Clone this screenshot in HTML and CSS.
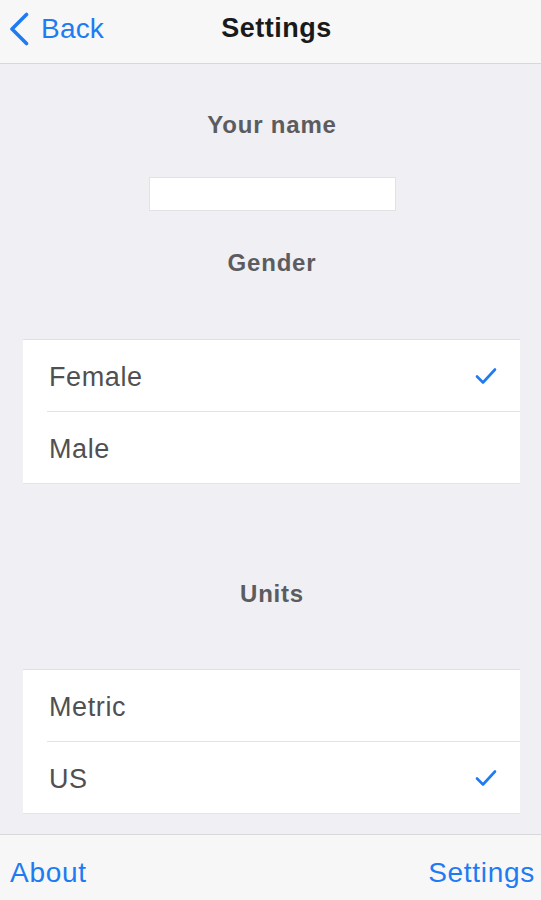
FILE: index.html
```html
<!DOCTYPE html>
<html lang="en">
<head>
<meta charset="utf-8">
<title>Settings</title>
<link rel="stylesheet" href="styles.css">
</head>
<body>
<div class="app">
  <header class="navbar">
    <a class="nav-back" href="#">
      <svg class="chevron" width="20" height="34" viewBox="0 0 20 34" aria-hidden="true">
        <path d="M17.5 2.5 L3 17 L17.5 31.5" fill="none" stroke="#1f7bf2" stroke-width="3.6" stroke-linecap="round" stroke-linejoin="round"/>
      </svg>
      <span>Back</span>
    </a>
    <h1 class="nav-title">Settings</h1>
    <span class="nav-spacer"></span>
  </header>

  <main class="content">
    <h2 class="section-label label-name">Your name</h2>
    <input class="name-input" type="text" aria-label="Your name">
    <h2 class="section-label label-gender">Gender</h2>
    <ul class="group group-gender">
      <li class="row"><span class="row-text">Female</span>
        <svg class="check" width="22" height="18" viewBox="0 0 22 18" aria-hidden="true"><path d="M2 9.5 L8 15.5 L20 2.5" fill="none" stroke="#1f7bf2" stroke-width="2.6" stroke-linecap="round" stroke-linejoin="round"/></svg>
      </li>
      <li class="row"><span class="row-text">Male</span></li>
    </ul>
    <h2 class="section-label label-units">Units</h2>
    <ul class="group group-units">
      <li class="row"><span class="row-text">Metric</span></li>
      <li class="row"><span class="row-text">US</span>
        <svg class="check" width="22" height="18" viewBox="0 0 22 18" aria-hidden="true"><path d="M2 9.5 L8 15.5 L20 2.5" fill="none" stroke="#1f7bf2" stroke-width="2.6" stroke-linecap="round" stroke-linejoin="round"/></svg>
      </li>
    </ul>
  </main>

  <footer class="tabbar">
    <a class="tab" href="#">About</a>
    <a class="tab" href="#">Settings</a>
  </footer>
</div>
</body>
</html>
```

FILE: styles.css
```css
* { box-sizing: border-box; }

html, body {
  margin: 0;
  padding: 0;
}

body {
  font-family: "Liberation Sans", Arial, sans-serif;
  background: #efeff4;
  width: 541px;
  height: 900px;
  overflow: hidden;
}

.app {
  display: flex;
  flex-direction: column;
  height: 900px;
}

.navbar {
  height: 64px;
  flex: none;
  background: #f7f7f7;
  border-bottom: 1px solid #d8d8da;
  display: grid;
  grid-template-columns: 1fr auto 1fr;
  align-items: center;
  padding: 0 0 6px 9px;
}

.nav-back {
  display: flex;
  align-items: center;
  gap: 12px;
  color: #1f7bf2;
  text-decoration: none;
  font-size: 28px;
  letter-spacing: 0.2px;
}

.chevron { display: block; margin-top: 1px; }

.nav-title {
  margin: 0 0 0 3px;
  font-size: 27px;
  font-weight: bold;
  color: #1a1a1a;
  letter-spacing: 0.5px;
}

.content {
  flex: 1;
  display: flex;
  flex-direction: column;
  align-items: center;
  padding-top: 46px;
}

.section-label {
  margin: 0;
  height: 30px;
  line-height: 30px;
  font-size: 24px;
  font-weight: bold;
  color: #5c5c60;
  letter-spacing: 0.8px;
  padding-left: 3px;
}

.name-input {
  margin-top: 37px;
  width: 247px;
  height: 34px;
  background: #fff;
  border: 1px solid #e2e2e6;
  margin-left: 3px;
  padding: 0 6px;
  font: inherit;
  font-size: 20px;
  outline: none;
}

.label-gender { margin-top: 37px; }

.group {
  list-style: none;
  margin: 0;
  padding: 0;
  width: 497px;
  margin-left: 2px;
  background: #fff;
  border-top: 1px solid #dfdfe2;
  border-bottom: 1px solid #e4e4e7;
}

.group-gender { margin-top: 61px; }
.label-units { margin-top: 95px; }
.group-units { margin-top: 60px; }

.row {
  height: 72px;
  display: flex;
  align-items: center;
  justify-content: space-between;
  margin-left: 24px;
  padding-left: 2px;
  padding-right: 23px;
}

.row + .row {
  border-top: 1px solid #e3e3e6;
  height: 72px;
}

.group .row:first-child { height: 71px; }

.row-text {
  font-size: 27px;
  color: #505052;
  letter-spacing: 0.6px;
  padding-top: 4px;
}

.check { display: block; margin-top: 1px; }

.tabbar {
  flex: none;
  height: 66px;
  background: #f7f7f7;
  border-top: 1px solid #d8d8da;
  display: flex;
  justify-content: space-between;
  align-items: flex-start;
  padding: 20px 6px 0 10px;
}

.tab {
  color: #1f7bf2;
  text-decoration: none;
  font-size: 28px;
  line-height: 36px;
  letter-spacing: 0.7px;
}
```
